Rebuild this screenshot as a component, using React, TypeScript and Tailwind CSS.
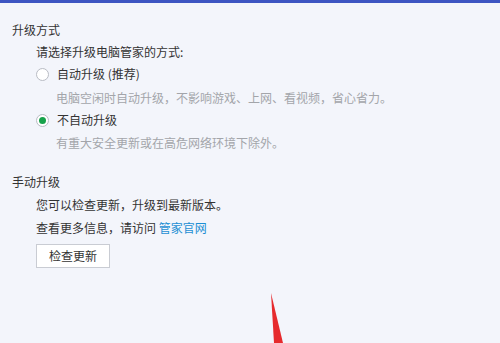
import React from "react";

const font = { fontFamily: '"Noto Sans CJK SC", "Noto Sans", sans-serif' };

function Radio({ checked }: { checked?: boolean }) {
  return (
    <span className="flex h-[13px] w-[13px] items-center justify-center rounded-full border border-[#b9bcc4] bg-white">
      {checked && <span className="h-[7px] w-[7px] rounded-full bg-[#17a24b]" />}
    </span>
  );
}

export default function App() {
  return (
    <div className="relative h-[343px] w-[500px] overflow-hidden bg-[#f3f5fb] text-[12px] leading-[20px] text-[#333]" style={font}>
      <div className="h-[3px] bg-[#3d55c2]" />
      <div className="pl-[12px] pt-[17px]">
        <div>升级方式</div>
        <div className="pl-[24px]">
          <div className="mt-[2px]">请选择升级电脑管家的方式:</div>
          <label className="mt-[2px] flex items-center gap-[8px]">
            <Radio />
            <span>自动升级 (推荐)</span>
          </label>
          <div className="mt-[4px] pl-[20px] text-[#a3a5aa]">电脑空闲时自动升级，不影响游戏、上网、看视频，省心省力。</div>
          <label className="mt-[2px] flex items-center gap-[8px]">
            <Radio checked />
            <span>不自动升级</span>
          </label>
          <div className="mt-[3px] pl-[20px] text-[#a3a5aa]">有重大安全更新或在高危网络环境下除外。</div>
        </div>
        <div className="mt-[19px]">手动升级</div>
        <div className="pl-[24px]">
          <div className="mt-[3px]">您可以检查更新，升级到最新版本。</div>
          <div className="mt-[3px]">
            查看更多信息，请访问 <span className="text-[#1d8fd3]">管家官网</span>
          </div>
          <button className="mt-[6px] flex h-[24px] w-[74px] items-center justify-center border border-[#c9ccd3] bg-white text-[12px] text-[#333]">
            检查更新
          </button>
        </div>
      </div>
      <svg className="absolute left-0 top-0" width="500" height="343">
        <polygon points="271,293 283,343 274,343" fill="#e62a2d" />
      </svg>
    </div>
  );
}
